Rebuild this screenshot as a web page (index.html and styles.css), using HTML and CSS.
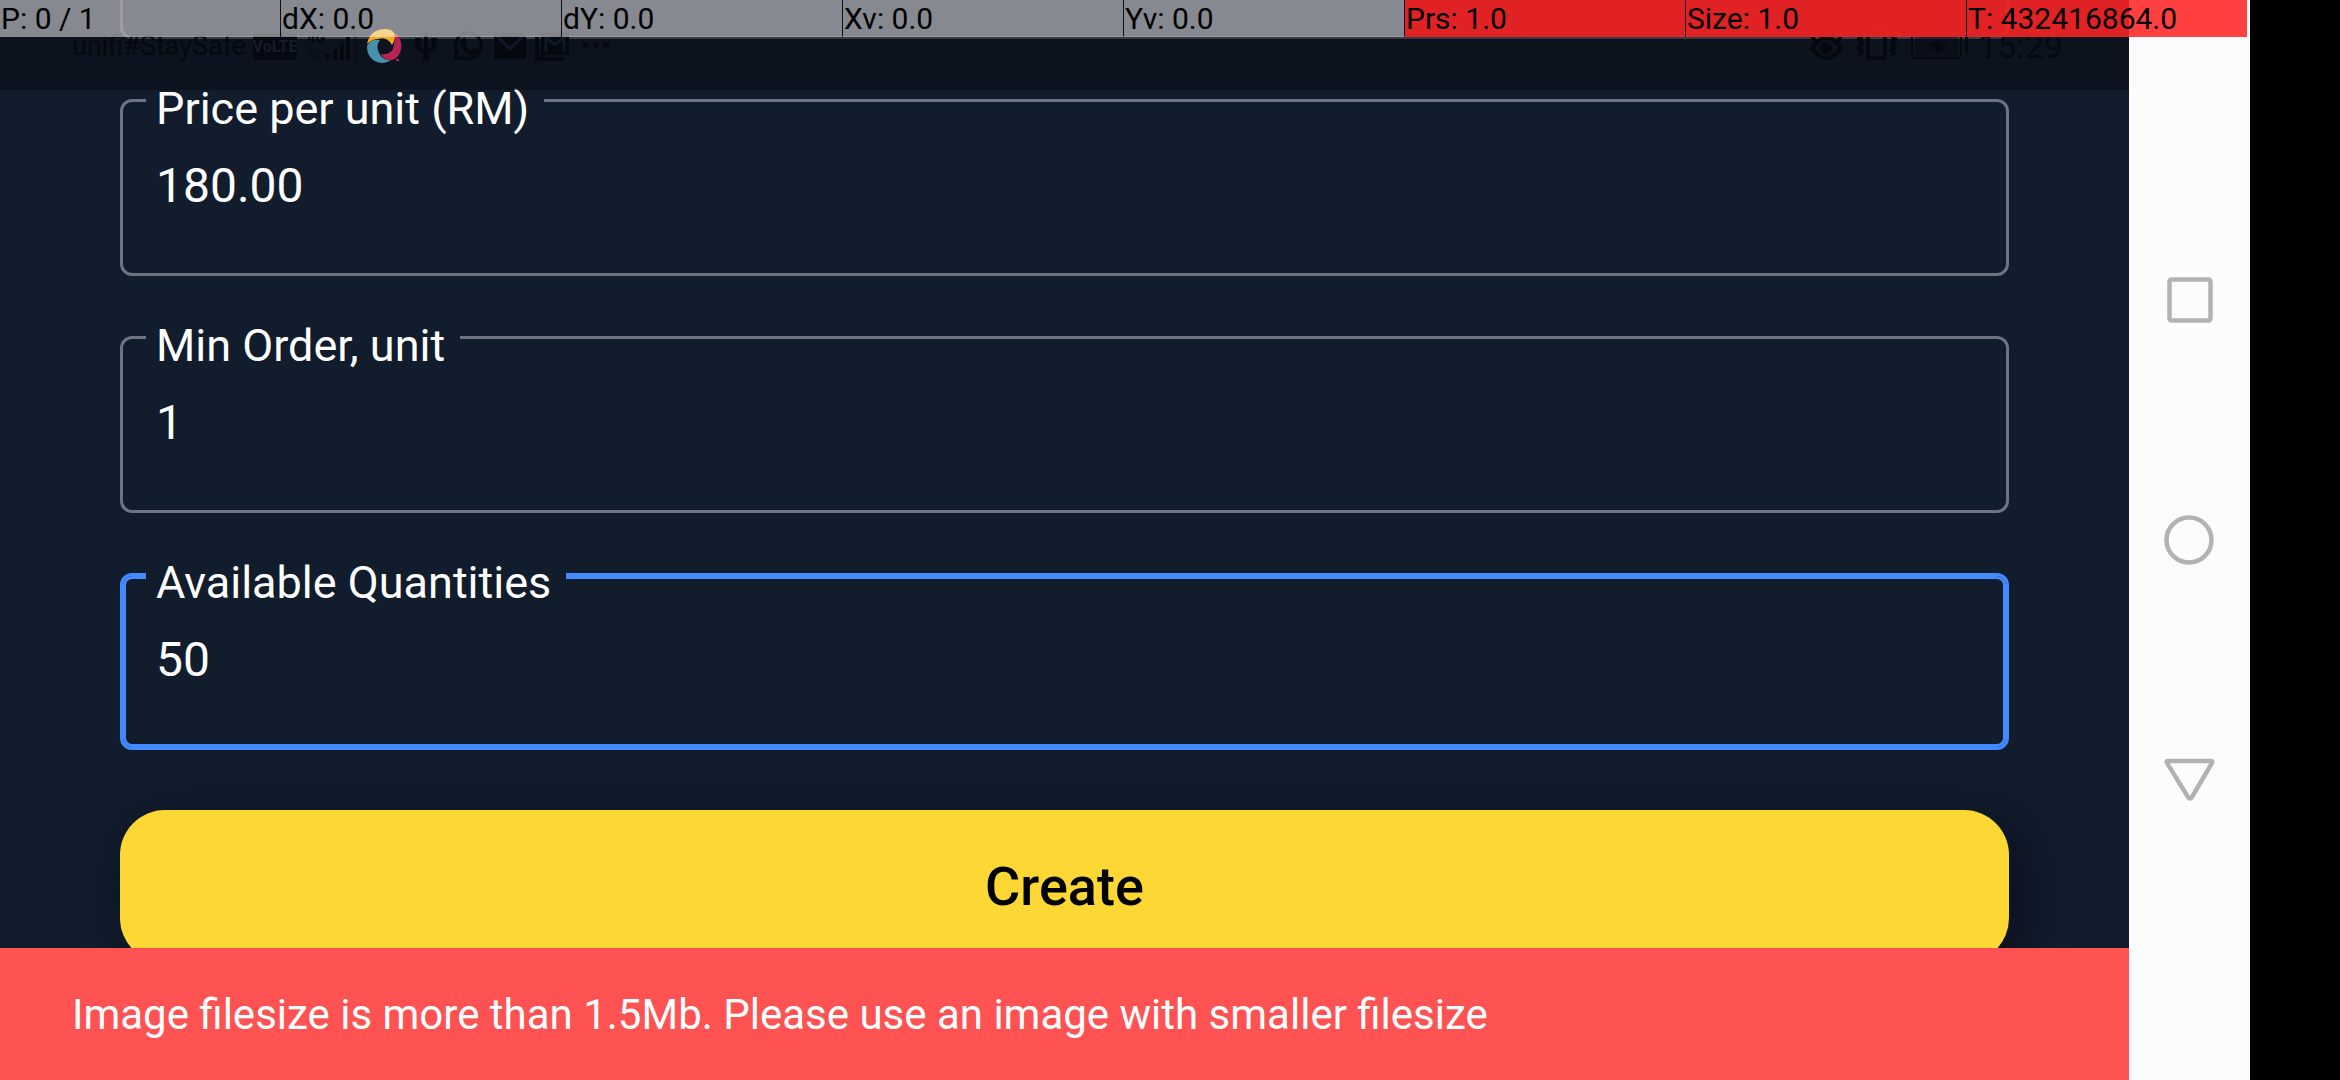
FILE: index.html
```html
<!DOCTYPE html>
<html lang="en">
<head>
<meta charset="utf-8">
<title>Create product</title>
<link rel="stylesheet" href="styles.css">
</head>
<body>
<div class="app">
  <header class="status">
    <div class="status-group">
      <span class="carrier">unifi#StaySafe</span>
      <svg width="50" height="36" viewBox="250 28 50 36"><rect x="253" y="32" width="44" height="28" rx="4"/><text class="volte" x="275" y="52" text-anchor="middle">VoLTE</text></svg>
      <svg width="58" height="36" viewBox="300 28 58 36"><text class="net" x="307" y="43">4G</text><path d="M325 54h4v6h-4zM333 49h4v11h-4zM340 43h4v17h-4zM346 37h4v23h-4z"/><path opacity=".4" d="M354 31h3v29h-3zM310 60v-6h-3l4-4 3 4h-2v6zM317 50v6h-3l4 4 3-4h-2v-6z"/></svg>
      <svg class="shutter" width="50" height="36" viewBox="358 28 50 36"><path fill="#f0a91c" d="M367 44c2-10 9-15 18-15 6 0 10 3 10 7 0 3-1 6-3 9-3-6-9-8-14-6-4 0-8 2-11 5z"/><path fill="#b62450" d="M395 33c8 6 8 17 3 23-5 6-13 6-17-2 8 1 13-3 13-10 1-4 1-8 1-11zM396 59h3v2h-3z"/><path fill="#4792ab" d="M367 46c3-6 8-7 13-6-4 5-3 11 1 16 3 3 6 5 10 4-7 5-16 3-20-2-3-3-4-7-4-12z"/></svg>
      <svg width="36" height="36" viewBox="408 28 36 36"><path class="line" d="M426 34v24M418 41v5q0 3 8 6 8-3 8-6v-5"/><path d="m426 30 4 6h-8zM415 38h6v6h-6zM431 38h6v6h-6z"/><circle cx="426" cy="58" r="3"/></svg>
      <svg width="44" height="36" viewBox="444 28 44 36"><path class="line thin-line" d="M455 59l2-7a13 13 0 1 1 5 5z"/><path d="M462 39c3-3 4-1 5 3l-2 3c1 3 4 5 6 6l3-3c5 2 5 3 3 5-4 4-9 1-12-2-4-4-6-9-3-12z"/></svg>
      <svg width="42" height="36" viewBox="488 28 42 36"><rect x="494" y="33" width="32" height="26" rx="2"/><path class="cut" d="m497 36 13 13 13-13"/></svg>
      <svg width="44" height="36" viewBox="530 28 44 36"><rect x="541" y="32" width="28" height="23" rx="2"/><path class="line" d="M537 37v22h27"/><path class="cut" d="M546 52V37l9 8 9-8v15"/></svg>
      <svg width="40" height="36" viewBox="574 28 40 36"><circle cx="585" cy="45" r="3"/><circle cx="596" cy="45" r="3"/><circle cx="606" cy="45" r="3"/></svg>
    </div>
    <div class="status-group">
      <svg width="46" height="36" viewBox="1806 28 46 36"><path class="line" d="M1814 48q15-20 29 0-14 20-29 0zM1817 41l-3-5M1840 41l3-5M1823 37l-1-4M1834 37l1-4"/><circle cx="1828" cy="48" r="6"/></svg>
      <svg width="54" height="36" viewBox="1850 28 54 36"><rect class="line" x="1868" y="32" width="17" height="26" rx="2"/><path class="line" d="m1862 36-3 3 3 4-3 4 3 4-3 4M1892 36l3 3-3 4 3 4-3 4 3 4"/></svg>
      <svg width="74" height="36" viewBox="1904 28 74 36"><rect class="thin" x="1912" y="32" width="49" height="26" rx="3"/><path opacity=".4" d="M1915 35h43v20h-43z"/><path d="m1924 47 14-7 1 4 10 1-13 7-2-5zM1965 37h3v16h-3z"/></svg>
      <time class="clock">15:29</time>
    </div>
  </header>
  <main class="content">
    <form class="form">
      <div class="field-end"></div>
      <div class="field">
        <label for="price">Price per unit (RM)</label>
        <input id="price" type="text" value="180.00">
      </div>
      <div class="field">
        <label for="min-order">Min Order, unit</label>
        <input id="min-order" type="text" value="1">
      </div>
      <div class="field active">
        <label for="quantity">Available Quantities</label>
        <input id="quantity" type="text" value="50">
      </div>
      <button class="create" type="button">Create</button>
    </form>
  </main>
  <div class="snackbar" role="alert">Image filesize is more than 1.5Mb. Please use an image with smaller filesize</div>
</div>
<nav class="nav">
  <button type="button" aria-label="Recents"><svg width="52" height="52" viewBox="0 0 52 52"><rect x="5.500" y="5.500" width="41" height="41" rx="2"/></svg></button>
  <button type="button" aria-label="Home"><svg width="52" height="52" viewBox="0 0 52 52"><circle cx="25" cy="26" r="22.500"/></svg></button>
  <button type="button" aria-label="Back"><svg width="52" height="52" viewBox="0 0 52 52"><path d="M4 7h43q2 0 1 2L28 43q-2 3-4 0L3 9q-1-2 1-2z"/></svg></button>
</nav>
<div class="cutout"></div>
<div class="pointer">
  <span>P: 0 / 1</span><span>dX: 0.0</span><span>dY: 0.0</span><span>Xv: 0.0</span><span>Yv: 0.0</span><span class="hot">Prs: 1.0</span><span class="hot">Size: 1.0</span><span class="hot">T: 432416864.0</span>
</div>
</body>
</html>
```
FILE: styles.css
```css
* { box-sizing: border-box; }

body {
  margin: 0;
  height: 100vh;
  display: flex;
  position: relative;
  overflow: hidden;
  background: #000;
  color: #fff;
  font-family: Roboto, "Noto Sans", sans-serif;
}

.app {
  flex: 1;
  min-width: 0;
  display: flex;
  flex-direction: column;
  position: relative;
  background: #111c2d;
}

/* Translucent system bar over the scrolled form */
.status {
  position: absolute;
  inset: 0 0 auto 0;
  height: 90px;
  padding: 28px 66px 0 72px;
  display: flex;
  justify-content: space-between;
  background: rgba(9, 13, 20, 0.55);
  color: #05080e;
}
.status-group { display: flex; height: 36px; }
.status svg { display: block; fill: #05080e; }
.status .line { fill: none; stroke: #05080e; stroke-width: 4; }
.status .thin { fill: none; stroke: #05080e; stroke-width: 2; }
.status .thin-line { stroke-width: 3; }
.status .cut { fill: none; stroke: #101827; stroke-width: 3; }
.status .volte { fill: #141c29; font-size: 16px; font-weight: 700; }
.net { font-size: 15px; font-weight: 700; }
.carrier { margin-right: 4px; font-size: 27px; line-height: 36px; }
.clock { font-size: 34px; line-height: 36px; }

.content { flex: 1; min-height: 0; overflow: hidden; }
.form {
  display: flex;
  flex-direction: column;
  gap: 60px;
  padding: 0 120px;
}

.field-end {
  height: 39px;
  border: 3px solid #6d7380;
  border-top: 0;
  border-radius: 0 0 12px 12px;
}

.field {
  display: flex;
  flex-direction: column;
  align-items: flex-start;
  padding: 0 23px 60px;
  border: 3px solid #6d7380;
  border-radius: 12px;
}
.field label {
  margin-top: -19px;
  padding: 0 15px 0 10px;
  background: #111c2d;
  font-size: 45px;
  line-height: 52px;
}
.field input {
  width: 100%;
  height: 56px;
  margin-top: 22px;
  padding: 0 10px;
  border: 0;
  outline: 0;
  background: transparent;
  color: inherit;
  font: inherit;
  font-size: 48px;
}
.field.active {
  border-color: #448aff;
  box-shadow: inset 0 0 0 3px #448aff;
}

.create {
  height: 153px;
  border: 0;
  border-radius: 45px;
  background: #fdd835;
  box-shadow: 12px 12px 45px rgba(12, 14, 24, 0.85);
  color: #000;
  font: 500 54px Roboto, "Noto Sans", sans-serif;
}

.snackbar {
  position: relative;
  padding: 41px 72px 39px;
  background: #ff5252;
  font-size: 42px;
  line-height: 52px;
}

.nav {
  width: 121px;
  display: flex;
  flex-direction: column;
  justify-content: center;
  align-items: center;
  background: #fcfcfc;
}
.nav button {
  width: 100%;
  height: 240px;
  padding: 0;
  display: flex;
  justify-content: center;
  align-items: center;
  border: 0;
  background: transparent;
}
.nav svg { fill: none; stroke: #b2b2b2; stroke-width: 4.5; }

.cutout { width: 90px; background: #000; }

/* Pointer readout drawn over every window */
.pointer {
  position: absolute;
  inset: 0 93px auto 0;
  display: grid;
  grid-template-columns: repeat(8, 1fr);
  gap: 1px;
  color: #000;
  font-size: 30px;
  line-height: 37px;
}
.pointer span {
  padding-left: 1px;
  height: 37px;
  background: rgba(255, 255, 255, 0.5);
  white-space: nowrap;
}
.pointer .hot {
  background: linear-gradient(rgba(255, 0, 0, 0.75), rgba(255, 0, 0, 0.75)), rgba(255, 255, 255, 0.5);
}
```
